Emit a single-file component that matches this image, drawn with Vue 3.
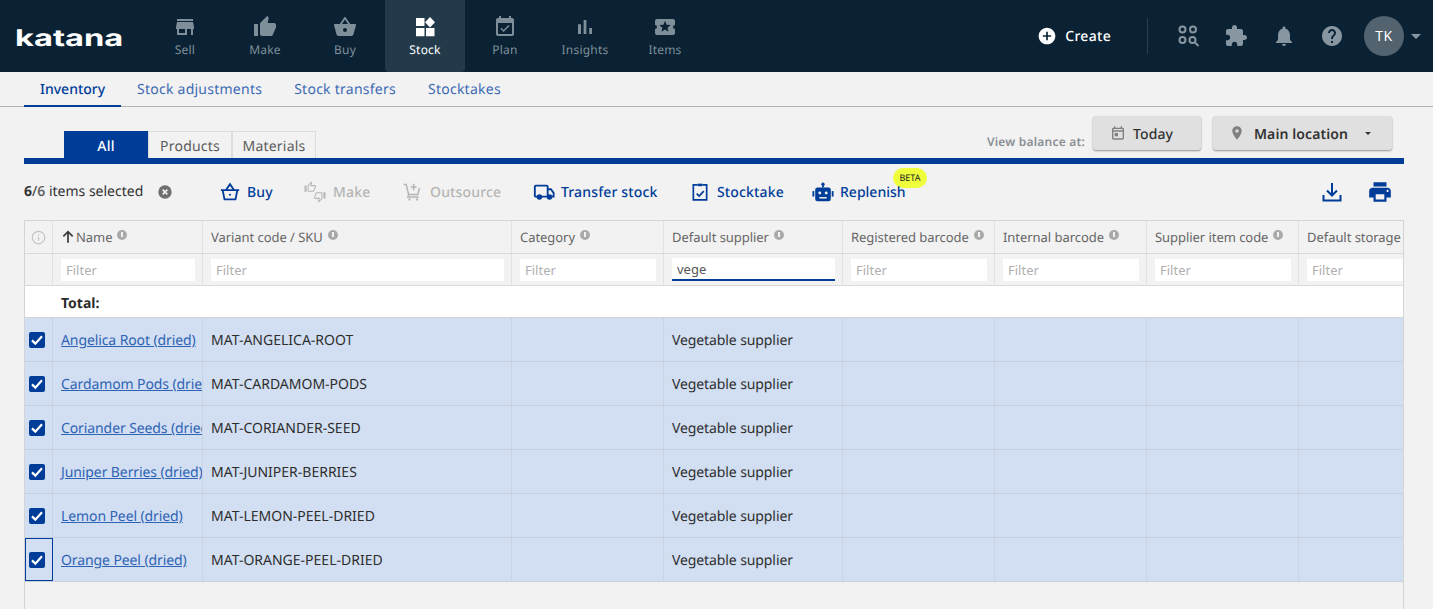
<script setup>
const nav = [
  { label: 'Sell', d: 'M20 4H4v2h16V4zm1 10v-2l-1-5H4l-1 5v2h1v6h10v-6h4v6h2v-6h1zm-9 4H6v-4h6v4z' },
  { label: 'Make', d: 'M1 21h4V9H1v12zm22-11c0-1.1-.9-2-2-2h-6.31l.95-4.57.03-.32c0-.41-.17-.79-.44-1.06L14.17 1 7.59 7.59C7.22 7.95 7 8.45 7 9v10c0 1.1.9 2 2 2h9c.83 0 1.54-.5 1.84-1.22l3.02-7.05c.09-.23.14-.47.14-.73v-2z' },
  { label: 'Buy', d: 'M17.21 9l-4.38-6.56c-.19-.28-.51-.42-.83-.42-.32 0-.64.14-.83.43L6.79 9H2c-.55 0-1 .45-1 1 0 .09.01.18.04.27l2.54 9.27c.23.84 1 1.46 1.92 1.46h13c.92 0 1.69-.62 1.93-1.46l2.54-9.27L23 10c0-.55-.45-1-1-1h-4.79zM9 9l3-4.4L15 9H9zm3 8c-1.1 0-2-.9-2-2s.9-2 2-2 2 .9 2 2-.9 2-2 2z' },
  { label: 'Stock', active: true, d: 'M3 3h8.500v8H3zM17 2l5 5.200-5 5.300-5-5.300zM3 13h8.500v8.200H3zM13 13h8.500v8.200H13z' },
  { label: 'Plan', d: 'M16.53 11.06L15.47 10l-4.88 4.88-2.12-2.12-1.06 1.06L10.59 17l5.94-5.94zM19 3h-1V1h-2v2H8V1H6v2H5c-1.11 0-1.99.9-1.99 2L3 19c0 1.1.89 2 2 2h14c1.1 0 2-.9 2-2V5c0-1.1-.9-2-2-2zm0 16H5V8h14v11z' },
  { label: 'Insights', d: 'M5 9.2h3V19H5zM10.6 5h2.8v14h-2.8zm5.6 8H19v6h-2.8z' },
  { label: 'Items', d: 'M20 12c0-1.1.9-2 2-2V6c0-1.1-.9-2-2-2H4c-1.1 0-1.99.9-1.99 2v4c1.1 0 1.99.9 1.99 2s-.89 2-2 2v4c0 1.1.9 2 2 2h16c1.1 0 2-.9 2-2v-4c-1.1 0-2-.9-2-2zm-4.42 4.8L12 14.5l-3.58 2.3 1.08-4.12-3.29-2.69 4.24-.25L12 5.8l1.54 3.95 4.24.25-3.29 2.69 1.09 4.11z' }
]
const subTabs = ['Inventory', 'Stock adjustments', 'Stock transfers', 'Stocktakes']
const columns = [
  { label: 'Variant code / SKU' },
  { label: 'Category' },
  { label: 'Default supplier', value: 'vege' },
  { label: 'Registered barcode' },
  { label: 'Internal barcode' },
  { label: 'Supplier item code' },
  { label: 'Default storage', noInfo: true }
]
const rows = [
  ['Angelica Root (dried)', 'MAT-ANGELICA-ROOT'],
  ['Cardamom Pods (dried)', 'MAT-CARDAMOM-PODS'],
  ['Coriander Seeds (dried)', 'MAT-CORIANDER-SEED'],
  ['Juniper Berries (dried)', 'MAT-JUNIPER-BERRIES'],
  ['Lemon Peel (dried)', 'MAT-LEMON-PEEL-DRIED'],
  ['Orange Peel (dried)', 'MAT-ORANGE-PEEL-DRIED']
]
const thumb = 'M9 21h9c.83 0 1.54-.5 1.84-1.22l3.02-7.05c.09-.23.14-.47.14-.73v-2c0-1.1-.9-2-2-2h-6.31l.95-4.57.03-.32c0-.41-.17-.79-.44-1.06L14.17 1 7.58 7.59C7.22 7.95 7 8.45 7 9v10c0 1.1.9 2 2 2zM9 9l4.34-4.34L12 10h9v2l-3 7H9V9zM1 9h4v12H1z'
</script>

<template>
  <div class="page">
    <header class="top">
      <div class="logo"><span>katana</span></div>
      <nav class="nav">
        <div v-for="n in nav" :key="n.label" class="nav-item" :class="{ active: n.active }">
          <svg viewBox="0 0 24 24" width="24" height="24"><path :d="n.d" fill="currentColor" /></svg>
          <span>{{ n.label }}</span>
        </div>
      </nav>
      <div class="top-right">
        <div class="create">
          <svg viewBox="0 0 24 24" width="20" height="20"><path d="M12 2C6.48 2 2 6.48 2 12s4.48 10 10 10 10-4.48 10-10S17.52 2 12 2zm5 11h-4v4h-2v-4H7v-2h4V7h2v4h4v2z" fill="#fff" /></svg>
          <span>Create</span>
        </div>
        <div class="sep"></div>
        <svg class="ti" viewBox="0 0 24 24" width="24" height="24" fill="none" stroke="#8796a0" stroke-width="2"><circle cx="6.500" cy="5.500" r="3" /><circle cx="17" cy="5.500" r="3" /><circle cx="6.500" cy="16" r="3" /><circle cx="16.500" cy="16" r="3" /><path d="M19 18.500l3.500 3.500" /></svg>
        <svg class="ti" viewBox="0 0 24 24" width="24" height="24"><path fill="#8796a0" d="M20.5 11H19V7c0-1.1-.9-2-2-2h-4V3.5C13 2.12 11.88 1 10.5 1S8 2.12 8 3.5V5H4c-1.1 0-1.99.9-1.99 2v3.8H3.5c1.49 0 2.7 1.21 2.7 2.7s-1.21 2.7-2.7 2.7H2V20c0 1.1.9 2 2 2h3.8v-1.5c0-1.49 1.21-2.7 2.7-2.7 1.49 0 2.7 1.21 2.7 2.7V22H17c1.1 0 2-.9 2-2v-4h1.5c1.38 0 2.5-1.12 2.5-2.5S21.88 11 20.5 11z" /></svg>
        <svg class="ti" viewBox="0 0 24 24" width="24" height="24"><path fill="#8796a0" d="M12 22c1.1 0 2-.9 2-2h-4c0 1.1.89 2 2 2zm6-6v-5c0-3.07-1.64-5.64-4.5-6.32V4c0-.83-.67-1.5-1.5-1.5s-1.5.67-1.5 1.5v.68C7.63 5.36 6 7.92 6 11v5l-2 2v1h16v-1l-2-2z" /></svg>
        <svg class="ti" viewBox="0 0 24 24" width="24" height="24"><path fill="#8796a0" d="M12 2C6.48 2 2 6.48 2 12s4.48 10 10 10 10-4.48 10-10S17.52 2 12 2zm1 17h-2v-2h2v2zm2.07-7.75l-.9.92C13.45 12.9 13 13.5 13 15h-2v-.5c0-1.1.45-2.1 1.17-2.83l1.24-1.26c.37-.36.59-.86.59-1.41 0-1.1-.9-2-2-2s-2 .9-2 2H8c0-2.21 1.79-4 4-4s4 1.79 4 4c0 .88-.36 1.68-.93 2.25z" /></svg>
        <div class="avatar">TK</div>
        <span class="caret light"></span>
      </div>
    </header>

    <div class="subnav">
      <div v-for="(t, i) in subTabs" :key="t" class="subtab" :class="{ on: i === 0 }">{{ t }}</div>
    </div>

    <main class="main">
      <div class="filters">
        <div class="seg">
          <div class="seg-btn on">All</div>
          <div class="seg-btn">Products</div>
          <div class="seg-btn">Materials</div>
        </div>
        <div class="balance">
          <span class="balance-label">View balance at:</span>
          <div class="raised today">
            <svg viewBox="0 0 24 24" width="16" height="16"><path fill="#808080" d="M19 4h-1V2h-2v2H8V2H6v2H5c-1.1 0-2 .9-2 2v14c0 1.1.9 2 2 2h14c1.1 0 2-.9 2-2V6c0-1.1-.9-2-2-2zm0 16H5V10h14v10zM5 8V6h14v2H5zm2 4h5v5H7z" /></svg>
            <span>Today</span>
          </div>
          <div class="raised loc">
            <svg viewBox="0 0 24 24" width="16" height="16"><path fill="#808080" d="M12 2C8.13 2 5 5.13 5 9c0 5.25 7 13 7 13s7-7.75 7-13c0-3.87-3.13-7-7-7zm0 9.5c-1.38 0-2.5-1.12-2.5-2.5s1.12-2.5 2.5-2.5 2.5 1.12 2.5 2.5-1.12 2.5-2.5 2.5z" /></svg>
            <span>Main location</span>
            <span class="caret dark"></span>
          </div>
        </div>
      </div>
      <div class="rule"></div>

      <div class="actions">
        <div class="selected"><b>6</b>/<span class="six">6</span> items selected</div>
        <svg class="clear" viewBox="0 0 24 24" width="16" height="16"><circle cx="12" cy="12" r="10" fill="#6f6f6f" /><path d="M8.500 8.500l7 7M15.500 8.500l-7 7" stroke="#f2f2f2" stroke-width="2.400" /></svg>
        <div class="act buy">
          <svg viewBox="0 0 24 24" width="22" height="22" fill="none" stroke="currentColor" stroke-width="2"><path d="M2 10h20M4 10l2 10h12l2-10M7.500 10L12 3.500l4.500 6.500" /><circle cx="12" cy="15" r="1.200" fill="currentColor" stroke="none" /></svg>
          <span>Buy</span>
        </div>
        <div class="act off make">
          <svg viewBox="0 0 24 24" width="22" height="22" fill="currentColor">
            <path :d="thumb" transform="translate(0 0) scale(.56)" />
            <path :d="thumb" transform="translate(24 24) rotate(180) scale(.56)" />
          </svg>
          <span>Make</span>
        </div>
        <div class="act off out">
          <svg viewBox="0 0 24 24" width="20" height="20" fill="none" stroke="currentColor" stroke-width="1.800"><path d="M2 3h3l3 12h11l2-8M8 15l-1 3h13M14 2v8M10.500 6h7" /><circle cx="9" cy="21" r="1.400" fill="currentColor" stroke="none" /><circle cx="18" cy="21" r="1.400" fill="currentColor" stroke="none" /></svg>
          <span>Outsource</span>
        </div>
        <div class="act trans">
          <svg viewBox="0 0 24 24" width="22" height="22" fill="none" stroke="currentColor" stroke-width="2"><path d="M5 17H3a1 1 0 01-1-1V6a1 1 0 011-1h12a1 1 0 011 1v11H9M16 9h3.500l3 4v4h-2.500" /><circle cx="7" cy="17.500" r="2" fill="currentColor" /><circle cx="18" cy="17.500" r="2" fill="currentColor" /></svg>
          <span>Transfer stock</span>
        </div>
        <div class="act take">
          <svg viewBox="0 0 24 24" width="20" height="20" fill="none" stroke="currentColor" stroke-width="2"><path d="M9 3.500H4v18h16v-18h-5" /><path d="M9 2h6v3H9z" fill="currentColor" stroke="none" /><path d="M8 14l3 3 5.500-6" /></svg>
          <span>Stocktake</span>
        </div>
        <div class="act rep">
          <svg viewBox="0 0 24 24" width="22" height="22"><path fill="currentColor" d="M11 4.500h2V7h-2z" /><circle cx="12" cy="3.500" r="1.800" fill="currentColor" /><rect x="3.500" y="7" width="17" height="15" rx="2.500" fill="currentColor" /><rect x="0.500" y="11" width="2" height="6" fill="currentColor" /><rect x="21.500" y="11" width="2" height="6" fill="currentColor" /><circle cx="8.500" cy="13" r="1.600" fill="#f2f2f2" /><circle cx="15.500" cy="13" r="1.600" fill="#f2f2f2" /><rect x="8" y="17.500" width="8" height="1.600" fill="#f2f2f2" /></svg>
          <span class="rep-label">Replenish</span>
          <span class="beta">BETA</span>
        </div>
        <div class="act-end">
          <svg viewBox="0 0 24 24" width="24" height="24" fill="none" stroke="#003d99" stroke-width="2"><path d="M12 3v12M7 10.500l5 5 5-5M3.500 15v5.500h17V15" /></svg>
          <svg viewBox="0 0 24 24" width="26" height="26"><path fill="#003d99" d="M19 8H5c-1.660 0-3 1.340-3 3v6h4v4h12v-4h4v-6c0-1.660-1.340-3-3-3zm-3 11H8v-5h8v5zm3-7c-.55 0-1-.45-1-1s.45-1 1-1 1 .45 1 1-.45 1-1 1zm-1-9H6v4h12V3z" /></svg>
        </div>
      </div>

      <div class="table">
        <div class="row head">
          <div class="cell chk">
            <svg viewBox="0 0 24 24" width="15" height="15" fill="none" stroke="#c4c4c4" stroke-width="2"><circle cx="12" cy="12" r="10" /><path d="M12 11v6M12 7v2" /></svg>
          </div>
          <div class="cell th">
            <svg class="arrow" viewBox="0 0 24 24" width="14" height="14" fill="none" stroke="#3c3c3c" stroke-width="3"><path d="M12 22V4M4 11l8-8 8 8" /></svg>
            <span>Name</span><i class="info"></i>
          </div>
          <div v-for="c in columns" :key="c.label" class="cell th">
            <span>{{ c.label }}</span><i v-if="!c.noInfo" class="info"></i>
          </div>
        </div>
        <div class="row filter">
          <div class="cell chk"></div>
          <div class="cell f"><input class="inp" placeholder="Filter" /></div>
          <div v-for="c in columns" :key="c.label" class="cell f">
            <input class="inp" :class="{ focus: c.value }" placeholder="Filter" :value="c.value || ''" />
          </div>
        </div>
        <div class="total"><b>Total:</b></div>
        <div v-for="(r, i) in rows" :key="r[0]" class="row data">
          <div class="cell chk" :class="{ focused: i === rows.length - 1 }">
            <span class="box">
              <svg viewBox="0 0 24 24" width="16" height="16" fill="none" stroke="#fff" stroke-width="3.400"><path d="M4.500 12.500l5 5 10-11" /></svg>
            </span>
          </div>
          <div class="cell td"><a class="link">{{ r[0] }}</a></div>
          <div class="cell td">{{ r[1] }}</div>
          <div class="cell td"></div>
          <div class="cell td tight">Vegetable supplier</div>
          <div class="cell td"></div>
          <div class="cell td"></div>
          <div class="cell td"></div>
          <div class="cell td"></div>
        </div>
      </div>
    </main>
  </div>
</template>

<style>
html, body { margin: 0; background: #f2f2f2; }
</style>

<style scoped>
* { box-sizing: border-box; }
.page {
  width: 1433px; height: 609px; overflow: hidden; display: flex; flex-direction: column;
  font-family: "Noto Sans", "Open Sans", sans-serif; font-size: 14px; color: #2b2b2b; background: #f2f2f2;
  text-rendering: geometricPrecision;
}
.top { height: 72px; flex: none; background: #0a2233; display: flex; align-items: stretch; position: relative; }
.logo { width: 145px; padding-left: 15px; height: 72px; }
.logo span {
  display: inline-block; font-family: "Inter", sans-serif; font-weight: 700; font-size: 23px; line-height: 22px;
  margin-top: 27px; color: #fff; transform: scaleX(1.42); transform-origin: left center; letter-spacing: 0;
}
.nav { display: flex; }
.nav-item {
  width: 80px; height: 72px; display: flex; flex-direction: column; align-items: center; padding-top: 15px;
  color: #7f8f9a; font-size: 12px; border-radius: 0 0 4px 4px;
}
.nav-item span { margin-top: 1px; line-height: 20px; letter-spacing: 0.2px; }
.nav-item.active { background: #223a4a; color: #fff; }
.top-right { margin-left: auto; display: flex; align-items: center; padding-right: 12px; }
.create { display: flex; align-items: center; gap: 8px; color: #fff; font-size: 14px; font-weight: 500; letter-spacing: 0.3px; margin-right: 36px; }
.sep { width: 1px; height: 36px; background: #2b4050; margin-right: 28px; }
.ti { margin-right: 24px; flex: none; }
.avatar {
  width: 40px; height: 40px; border-radius: 50%; background: #52636f; color: #fff; margin-left: -4px;
  display: flex; align-items: center; justify-content: center; font-size: 14px; letter-spacing: 0.5px;
}
.caret { width: 0; height: 0; border-left: 5px solid transparent; border-right: 5px solid transparent; }
.caret.light { border-top: 5px solid #8796a0; margin-left: 7px; }
.caret.dark { border-left-width: 3.500px; border-right-width: 3.500px; border-top: 3.500px solid #333; margin-left: 16px; }

.subnav { height: 35px; flex: none; padding-left: 24px; display: flex; border-bottom: 1px solid #b3b3b3; }
.subtab { padding: 0 16px; line-height: 36px; color: #3d6bb3; letter-spacing: 0.25px; height: 35px; }
.subtab.on { color: #003d99; border-bottom: 2px solid #003d99; font-weight: 500; letter-spacing: 0; width: 97px; white-space: nowrap; }

.main { flex: 1; padding: 0 29px 0 24px; display: flex; flex-direction: column; min-height: 0; }
.filters { height: 51px; flex: none; display: flex; justify-content: space-between; align-items: flex-end; }
.seg { display: flex; margin-left: 40px; height: 27px; }
.seg-btn { width: 84px; text-align: center; line-height: 30px; color: #5c5c5c; border: 1px solid #dcdcdc; border-bottom: 0; letter-spacing: 0.2px; }
.seg-btn.on { background: #003d99; color: #fff; border-color: #003d99; font-weight: 500; }
.balance { display: flex; align-items: flex-start; align-self: flex-start; padding-top: 9px; margin-right: 12px; }
.balance-label { font-size: 12px; font-weight: 600; color: #8a8f94; margin-top: 17px; margin-right: 8px; letter-spacing: 0.2px; }
.raised {
  height: 34px; background: #e0e0e0; border-radius: 3px; box-shadow: 0 1px 2px rgba(0,0,0,.4);
  display: flex; align-items: center; font-weight: 600; color: #333; font-size: 14px; letter-spacing: 0.1px;
}
.raised > span:not(.caret) { margin-top: 2px; }
.today { width: 108px; padding-left: 17px; gap: 7px; margin-right: 12px; font-weight: 500; }
.loc { width: 179px; padding-left: 16px; gap: 9px; }
.loc .caret { margin-left: 8px; }
.rule { height: 6px; flex: none; background: #003d99; }

.actions { height: 56px; flex: none; display: flex; align-items: center; position: relative; }
.selected { font-size: 14px; color: #333; margin-right: 14px; margin-bottom: 2px; width: 119px; white-space: nowrap; }
.six { font-weight: 600; color: #666; }
.clear { margin-right: 46px; flex: none; }
.act { display: flex; align-items: center; color: #003d99; font-weight: 500; gap: 6px; letter-spacing: 0.15px; position: relative; white-space: nowrap; }
.act.off { color: #b5b5b5; }
.buy { width: 85px; }
.make { width: 98px; gap: 7px; }
.out { width: 131px; gap: 8px; }
.trans { width: 157px; }
.take { width: 122px; gap: 7px; }
.rep { gap: 6px; letter-spacing: 0; }
.rep-label { position: relative; z-index: 1; }
.beta {
  position: absolute; left: 81px; top: -13px; width: 34px; height: 20px; border-radius: 10px;
  background: #efff3c; color: #222; font-size: 9px; font-weight: 400; line-height: 20px; text-align: center; letter-spacing: 0;
}
.act-end { margin-left: auto; display: flex; align-items: center; gap: 23px; margin-right: 11px; }

.table { flex: 1; border: 1px solid #d4d4d4; border-bottom: 0; min-height: 0; overflow: hidden; }
.row { display: grid; grid-template-columns: 28px 150px 309px 152px 179px 152px 152px 152px 1fr; }
.head { height: 33px; border-bottom: 1px solid #d9d9d9; }
.filter { height: 32px; border-bottom: 1px solid #d9d9d9; }
.cell { border-right: 1px solid #e2e2e2; min-width: 0; overflow: hidden; white-space: nowrap; }
.cell:last-child { border-right: 0; }
.chk { display: flex; align-items: center; justify-content: center; }
.th { display: flex; align-items: center; padding-left: 8px; font-size: 13px; color: #666; letter-spacing: -0.05px; }
.th .arrow { margin-right: 1px; flex: none; }
.info { width: 10px; height: 10px; border-radius: 50%; background: #aaa; display: inline-block; margin-left: 5px; margin-top: -5px; flex: none; position: relative; }
.info::after { content: ""; position: absolute; left: 4px; top: 2.500px; width: 2px; height: 5px; background: #f2f2f2; }
.f { padding: 5px 0 0 8px; }
.inp {
  width: 134px; height: 22px; border: 0; outline: 0; padding: 0 5px; background: #fff; font: 13px "Noto Sans", sans-serif; color: #555; display: block; border-radius: 0;
}
.filter .f:nth-child(3) .inp { width: 293px; }
.filter .f:nth-child(4) .inp { width: 136px; }
.filter .f:nth-child(5) .inp { width: 163px; }
.filter .f:nth-child(6) .inp, .filter .f:nth-child(7) .inp, .filter .f:nth-child(8) .inp { width: 136px; }
.filter .f:nth-child(9) .inp { width: 136px; }
.inp::placeholder { color: #b0b0b0; opacity: 1; }
.inp.focus { height: 23px; margin-top: -1px; border-bottom: 2px solid #003d99; }
.total { height: 32px; background: #fff; border-bottom: 1px solid #d4d4d4; padding-left: 36px; line-height: 35px; }
.total b { font-weight: 700; font-size: 14px; }
.data { height: 44px; background: #d2dff2; border-bottom: 1px solid #c6d0e0; }
.data .cell { border-right-color: #c9d3e3; display: flex; align-items: center; }
.td { padding-left: 8px; padding-top: 2px; font-size: 14px; color: #2e2e2e; }
.tight { letter-spacing: -0.1px; }
.link { color: #2f63b5; text-decoration: underline; letter-spacing: -0.1px; }
.data .chk { justify-content: flex-start; padding-left: 4px; padding-top: 0; }
.chk.focused { outline: 1px solid #003d99; outline-offset: -1px; }
.box { width: 16px; height: 16px; background: #003d99; border-radius: 2px; display: flex; }
</style>
